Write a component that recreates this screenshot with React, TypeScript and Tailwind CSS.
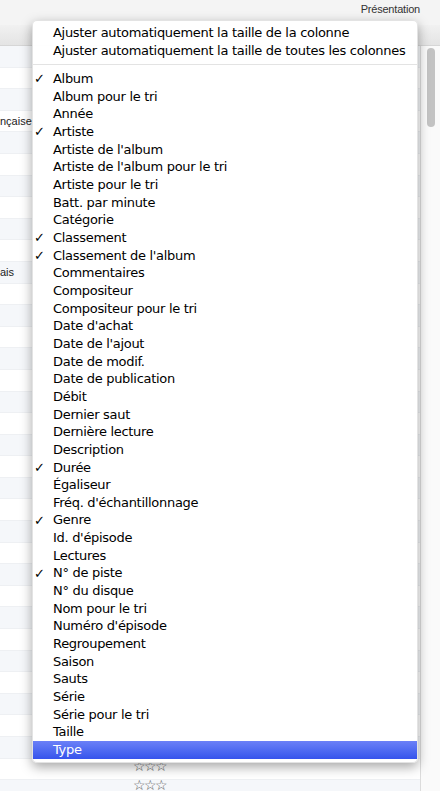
import React from 'react';

const items: { label: string; checked?: boolean; selected?: boolean }[] = [
  { label: 'Album', checked: true },
  { label: 'Album pour le tri' },
  { label: 'Année' },
  { label: 'Artiste', checked: true },
  { label: "Artiste de l'album" },
  { label: "Artiste de l'album pour le tri" },
  { label: 'Artiste pour le tri' },
  { label: 'Batt. par minute' },
  { label: 'Catégorie' },
  { label: 'Classement', checked: true },
  { label: "Classement de l'album", checked: true },
  { label: 'Commentaires' },
  { label: 'Compositeur' },
  { label: 'Compositeur pour le tri' },
  { label: "Date d'achat" },
  { label: "Date de l'ajout" },
  { label: 'Date de modif.' },
  { label: 'Date de publication' },
  { label: 'Débit' },
  { label: 'Dernier saut' },
  { label: 'Dernière lecture' },
  { label: 'Description' },
  { label: 'Durée', checked: true },
  { label: 'Égaliseur' },
  { label: "Fréq. d'échantillonnage" },
  { label: 'Genre', checked: true },
  { label: "Id. d'épisode" },
  { label: 'Lectures' },
  { label: 'N° de piste', checked: true },
  { label: 'N° du disque' },
  { label: 'Nom pour le tri' },
  { label: "Numéro d'épisode" },
  { label: 'Regroupement' },
  { label: 'Saison' },
  { label: 'Sauts' },
  { label: 'Série' },
  { label: 'Série pour le tri' },
  { label: 'Taille' },
  { label: 'Type', selected: true },
];

// bits of the first column that peek out left of the menu
const leftText: { [k: number]: string } = { 3: 'nçaise', 10: 'ais' };

export default function App() {
  const rows = Array.from({ length: 35 });

  return (
    <div
      className="relative w-[440px] h-[791px] overflow-hidden bg-white text-black"
      style={{ fontFamily: '"DejaVu Sans", "Liberation Sans", sans-serif' }}
    >
      {/* toolbar */}
      <div className="h-[25px] bg-[#f4f4f4] flex items-center justify-end pr-[20px]">
        <span className="text-[11px] text-[#333] tracking-[-0.2px] mt-[-6px]" style={{ fontFamily: '"Liberation Sans", sans-serif' }}>
          Présentation
        </span>
      </div>

      {/* header row */}
      <div className="h-[21px] bg-gradient-to-b from-[#f1f1f1] to-[#e4e4e4] border-b border-[#d6d6d6]" />

      <div className="flex">
        {/* table body */}
        <div className="flex-1">
          {rows.map((_, i) => (
            <div
              key={i}
              className={
                'h-[21.6px] flex items-center border-b border-[#eef0f3] ' +
                (i % 2 === 0 ? 'bg-[#f5f7fa]' : 'bg-white')
              }
            >
              <div className="w-[32px] shrink-0 text-[11px] text-[#222] overflow-hidden whitespace-nowrap" style={{ fontFamily: '"Liberation Sans", sans-serif' }}>
                {leftText[i] || ''}
              </div>
              <div className="w-[101px] shrink-0 h-full" />
              {i >= 33 && (
                <div className={'text-[14px] leading-none tracking-[-1.5px] text-[#555] ' + (i === 33 ? '-mt-[6px]' : '-mt-[11px]')}>☆☆☆</div>
              )}
            </div>
          ))}
        </div>
        {/* scrollbar */}
        <div className="w-[20px] shrink-0 bg-[#fafafa] border-l border-[#dcdcdc] flex justify-center pt-[2px]">
          <div className="w-[8px] h-[79px] rounded-full bg-[#c3c3c3] ml-[1px]" />
        </div>
      </div>

      {/* column menu */}
      <div className="absolute left-[32px] top-[20px] w-[386px] rounded-[5px] bg-white/[0.97] shadow-[0_4px_12px_rgba(0,0,0,0.35)] border border-[#d0d0d0]/60 py-[3px] text-[13px] tracking-[-0.3px]">
        <div className="h-[17.66px] flex items-center pl-[20px]">Ajuster automatiquement la taille de la colonne</div>
        <div className="h-[17.66px] flex items-center pl-[20px]">Ajuster automatiquement la taille de toutes les colonnes</div>
        <div className="h-[10.7px] flex items-center">
          <div className="w-full h-px bg-[#e3e3e3]" />
        </div>
        {items.map((it) => (
          <div
            key={it.label}
            className={
              'h-[17.66px] flex items-center ' +
              (it.selected ? 'bg-gradient-to-b from-[#6b80f7] to-[#3653ec] text-white' : '')
            }
          >
            <span className="w-[20px] shrink-0 text-[13px] pl-[1px] leading-none font-bold">{it.checked ? '✓' : ''}</span>
            <span>{it.label}</span>
          </div>
        ))}
      </div>
    </div>
  );
}
